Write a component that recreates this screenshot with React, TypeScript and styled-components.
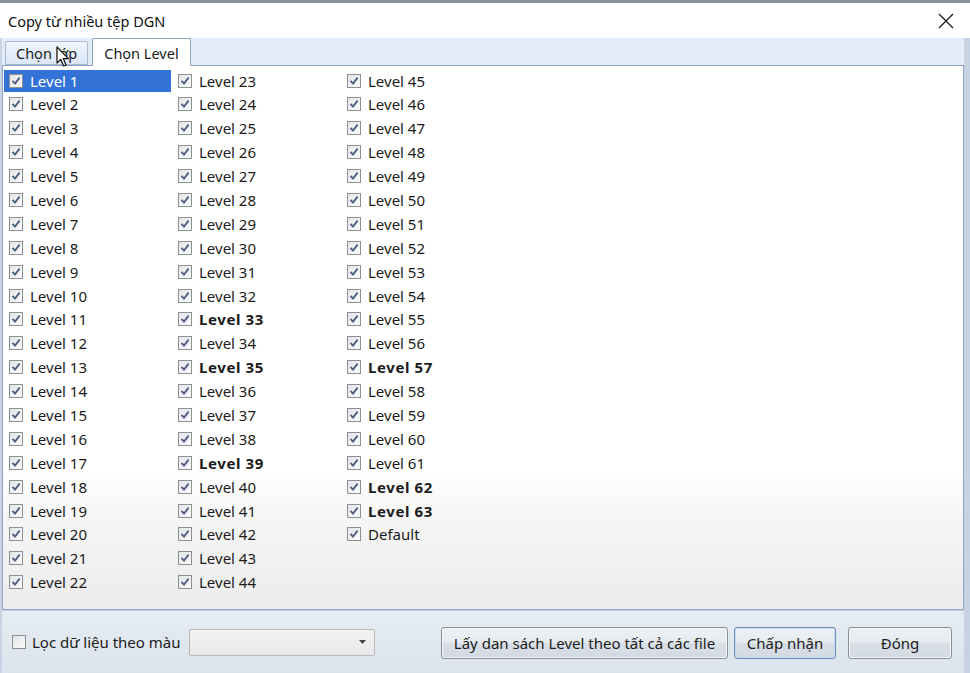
import React from 'react';
import styled, { createGlobalStyle } from 'styled-components';

const GlobalStyle = createGlobalStyle`
  html, body {
    margin: 0;
    padding: 0;
    background: #ffffff;
  }
  #root {
    width: 970px;
    height: 673px;
  }
`;

const FONT = `"Noto Sans", "Open Sans", Arial, sans-serif`;

const Window = styled.div`
  position: relative;
  width: 970px;
  height: 673px;
  box-sizing: border-box;
  border-top: 3px solid #8a929c;
  background: #ffffff;
  display: flex;
  flex-direction: column;
  font-family: ${FONT};
  color: #1b1b1b;
  overflow: hidden;
`;

const TitleBar = styled.div`
  height: 35px;
  display: flex;
  align-items: center;
  justify-content: space-between;
  padding: 0 16px 0 8px;
  background: #ffffff;
`;

const Title = styled.div`
  font-size: 14.5px;
  color: #111;
`;

const CloseBtn = styled.div`
  width: 16px;
  height: 16px;
  display: flex;
`;

const Body = styled.div`
  flex: 1;
  display: flex;
  flex-direction: column;
  background: #dfe7f1;
  border-left: 2px solid #c8d4e3;
  border-right: 6px solid #c7d3e2;
`;

const TabStrip = styled.div`
  height: 27px;
  display: flex;
  align-items: flex-end;
  gap: 4px;
  padding-left: 3px;
  background: #e3ecf9;
`;

const Tab = styled.div<{ active?: boolean }>`
  box-sizing: border-box;
  height: ${({ active }) => (active ? '28px' : '24px')};
  margin-bottom: ${({ active }) => (active ? '-1px' : '0')};
  padding: 0 ${({ active }) => (active ? '11px' : '10px')};
  display: flex;
  align-items: center;
  font-size: 14.5px;
  color: #1b1b1b;
  border: 1px solid ${({ active }) => (active ? '#8ea3c1' : '#a7b8cf')};
  border-bottom: ${({ active }) => (active ? 'none' : '1px solid #a7b8cf')};
  border-radius: 2px 2px 0 0;
  background: ${({ active }) =>
    active ? '#ffffff' : 'linear-gradient(#f1f6fd, #dbe6f5)'};
  position: relative;
  z-index: ${({ active }) => (active ? 2 : 1)};
`;

const Panel = styled.div`
  height: 545px;
  box-sizing: border-box;
  border: 1px solid #8ea3c1;
  background: linear-gradient(
    to bottom,
    #ffffff 0%,
    #ffffff 74%,
    #f5f5f5 84%,
    #ececec 100%
  );
  padding: 4px 1px;
  position: relative;
  z-index: 1;
`;

const LevelGrid = styled.div`
  display: grid;
  grid-auto-flow: column;
  grid-template-rows: repeat(22, 22px);
  grid-auto-columns: 169px;
  row-gap: 1.9px;
`;

const LevelItem = styled.div<{ selected?: boolean; bold?: boolean }>`
  width: 167px;
  height: 22px;
  box-sizing: border-box;
  display: flex;
  align-items: center;
  gap: 7px;
  padding: 0 0 1px 5px;
  font-size: 15px;
  font-weight: ${({ bold }) => (bold ? 700 : 400)};
  letter-spacing: ${({ bold }) => (bold ? '0.6px' : '0')};
  color: ${({ selected }) => (selected ? '#ffffff' : '#1b1b1b')};
  background: ${({ selected }) => (selected ? '#3372d6' : 'transparent')};
`;

const Box = styled.span`
  width: 14px;
  height: 14px;
  box-sizing: border-box;
  flex: none;
  border: 1px solid #8e8f8f;
  background: linear-gradient(135deg, #e3e5e9, #fbfbfc);
  display: flex;
  align-items: center;
  justify-content: center;
`;

const BottomBar = styled.div`
  flex: 1;
  display: flex;
  align-items: center;
  padding: 0 12px 0 10px;
  border-top: 1px solid #c2cfdf;
  background: linear-gradient(#e6ecf3, #dbe3ec);
`;

const FilterLabel = styled.label`
  display: flex;
  align-items: center;
  gap: 6px;
  font-size: 15px;
  color: #1b1b1b;
  margin-right: 9px;
`;

const Combo = styled.div`
  width: 186px;
  height: 27px;
  box-sizing: border-box;
  border: 1px solid #b5b8bd;
  border-radius: 2px;
  background: linear-gradient(#f2f2f2, #e9e9e9);
  display: flex;
  align-items: center;
  justify-content: flex-end;
  padding-right: 8px;
  margin-right: auto;
`;

const Buttons = styled.div`
  display: flex;
  gap: 6px;
  margin-top: 2px;
`;

const Button = styled.div<{ w: number; isDefault?: boolean; spaced?: boolean }>`
  width: ${({ w }) => w}px;
  height: 32px;
  box-sizing: border-box;
  margin-left: ${({ spaced }) => (spaced ? '6px' : '0')};
  border: 1px solid ${({ isDefault }) => (isDefault ? '#6f8fb7' : '#8a8f96')};
  border-radius: 3px;
  box-shadow: inset 0 0 0 1px
    ${({ isDefault }) => (isDefault ? '#c4dcf3' : '#f4f6f8')};
  background: linear-gradient(#eef2f6 0%, #e6ebf0 48%, #d9dfe6 52%, #d3d9e0 100%);
  display: flex;
  align-items: center;
  justify-content: center;
  font-size: 15px;
  color: #1b1b1b;
`;

const Cursor = styled.svg`
  position: absolute;
  left: 56px;
  top: 43px;
  z-index: 5;
`;

const CheckMark = () => (
  <svg width="10" height="10" viewBox="0 0 10 10">
    <path
      d="M1.5 4.8 L4 7.6 L8.6 1.6"
      fill="none"
      stroke="#4b5d7c"
      strokeWidth="1.8"
    />
  </svg>
);

const boldLevels = [33, 35, 39, 57, 62, 63];

const levels: { label: string; bold: boolean }[] = [
  ...Array.from({ length: 63 }, (_, i) => ({
    label: `Level ${i + 1}`,
    bold: boldLevels.includes(i + 1),
  })),
  { label: 'Default', bold: false },
];

export default function App() {
  return (
    <>
      <GlobalStyle />
      <Window>
        <TitleBar>
          <Title>Copy từ nhiều tệp DGN</Title>
          <CloseBtn>
            <svg width="16" height="16" viewBox="0 0 16 16">
              <path d="M1 1 L15 15 M15 1 L1 15" stroke="#1a1a1a" strokeWidth="1.3" />
            </svg>
          </CloseBtn>
        </TitleBar>
        <Body>
          <TabStrip>
            <Tab>Chọn lớp</Tab>
            <Tab active>Chọn Level</Tab>
          </TabStrip>
          <Panel>
            <LevelGrid>
              {levels.map((lv, i) => (
                <LevelItem key={lv.label} selected={i === 0} bold={lv.bold}>
                  <Box>
                    <CheckMark />
                  </Box>
                  {lv.label}
                </LevelItem>
              ))}
            </LevelGrid>
          </Panel>
          <BottomBar>
            <FilterLabel>
              <Box />
              Lọc dữ liệu theo màu
            </FilterLabel>
            <Combo>
              <svg width="7" height="4" viewBox="0 0 7 4">
                <path d="M0 0 H7 L3.5 4 Z" fill="#444" />
              </svg>
            </Combo>
            <Buttons>
              <Button w={287}>Lấy dan sách Level theo tất cả các file</Button>
              <Button w={102} isDefault>
                Chấp nhận
              </Button>
              <Button w={104} spaced>
                Đóng
              </Button>
            </Buttons>
          </BottomBar>
        </Body>
        <Cursor width="14" height="22" viewBox="0 0 14 22">
          <path
            d="M1 1 L1 17 L4.8 13.4 L7.6 20 L10 19 L7.3 12.6 L12.4 12.6 Z"
            fill="#ffffff"
            stroke="#111111"
            strokeWidth="1.2"
            strokeLinejoin="round"
          />
        </Cursor>
      </Window>
    </>
  );
}
